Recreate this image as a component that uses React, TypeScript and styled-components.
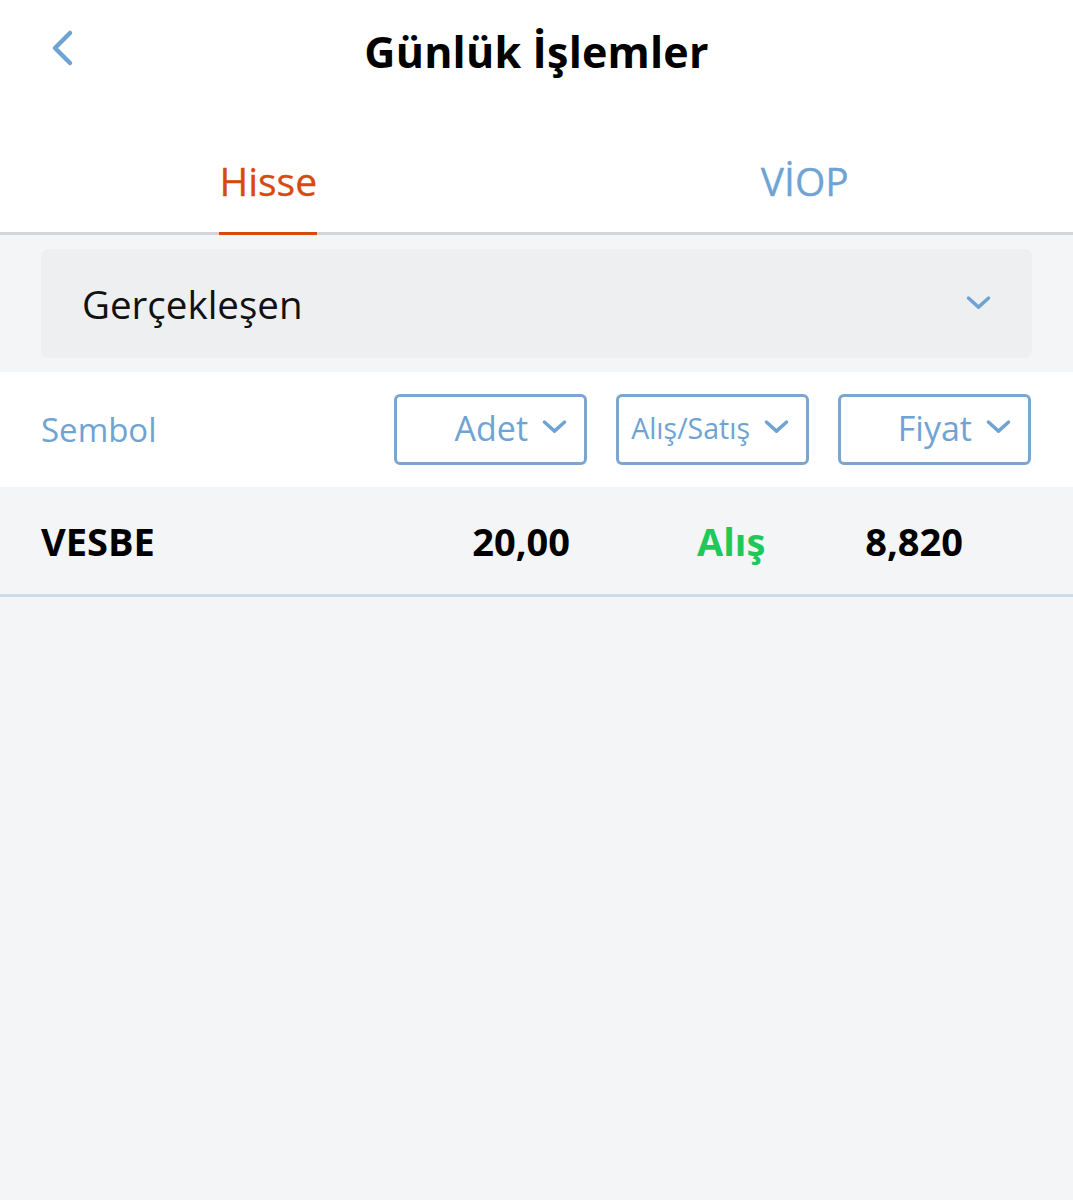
import React from 'react'
import styled, { createGlobalStyle } from 'styled-components'

const GlobalStyle = createGlobalStyle`
  html, body {
    margin: 0;
    padding: 0;
    background: #f4f5f7;
    font-family: 'Open Sans', 'Noto Sans', sans-serif;
  }
`

const Chevron = ({ size = 26, color = '#6fa3d3', width = 3 }) => (
  <svg width={size} height={size * 0.6} viewBox="0 0 26 16" fill="none">
    <path d="M3 3 L13 12 L23 3" stroke={color} strokeWidth={width} strokeLinecap="round" strokeLinejoin="round" />
  </svg>
)

const BackIcon = () => (
  <svg width="28" height="40" viewBox="0 0 28 40" fill="none">
    <path d="M22 4 L7 19 L22 34" stroke="#6fa3d3" strokeWidth="4.5" strokeLinecap="round" strokeLinejoin="round" />
  </svg>
)

export default function App() {
  return (
    <>
      <GlobalStyle />
      <StyledPage>
        <StyledHeader>
          <StyledBack>
            <BackIcon />
          </StyledBack>
          <StyledTitle>Günlük İşlemler</StyledTitle>
        </StyledHeader>
        <StyledTabs>
          <StyledTab $active>
            <StyledTabLabel $active>Hisse</StyledTabLabel>
          </StyledTab>
          <StyledTab>
            <StyledTabLabel>VİOP</StyledTabLabel>
          </StyledTab>
        </StyledTabs>
        <StyledSelectWrap>
          <StyledSelect>
            <span>Gerçekleşen</span>
            <Chevron size={27} width={3.4} />
          </StyledSelect>
        </StyledSelectWrap>
        <StyledFilterRow>
          <StyledSymbolLabel>Sembol</StyledSymbolLabel>
          <StyledSortButton>
            <StyledSortText>Adet</StyledSortText>
            <Chevron size={27} width={3.4} />
          </StyledSortButton>
          <StyledSortButton>
            <StyledSortText $small>Alış/Satış</StyledSortText>
            <Chevron size={27} width={3.4} />
          </StyledSortButton>
          <StyledSortButton>
            <StyledSortText>Fiyat</StyledSortText>
            <Chevron size={27} width={3.4} />
          </StyledSortButton>
        </StyledFilterRow>
        <StyledTradeRow>
          <StyledSymbol>VESBE</StyledSymbol>
          <StyledNumber $right={570}>20,00</StyledNumber>
          <StyledSide>Alış</StyledSide>
          <StyledNumber $right={963}>8,820</StyledNumber>
        </StyledTradeRow>
      </StyledPage>
    </>
  )
}

const StyledPage = styled.div`
  min-height: 1200px;
  background: #f4f5f7;
`

const StyledHeader = styled.header`
  position: relative;
  height: 104px;
  background: #fff;
  display: flex;
  align-items: center;
  justify-content: center;
`

const StyledBack = styled.div`
  position: absolute;
  left: 48px;
  top: 29px;
  display: flex;
`

const StyledTitle = styled.h1`
  margin: 0 0 2px 0;
  font-size: 43px;
  font-weight: 700;
  color: #000;
  letter-spacing: 0.2px;
`

const StyledTabs = styled.nav`
  display: grid;
  grid-template-columns: 1fr 1fr;
  background: #fff;
  height: 131px;
  border-bottom: 3px solid #d4d5d8;
  box-sizing: border-box;
`

const StyledTab = styled.div`
  display: flex;
  justify-content: center;
  align-items: flex-end;
`

const StyledTabLabel = styled.span`
  font-size: 39px;
  line-height: 1;
  padding-bottom: 32px;
  margin-bottom: -3px;
  color: ${(p) => (p.$active ? '#d9480f' : '#6fa3d3')};
  border-bottom: 3px solid ${(p) => (p.$active ? '#d9480f' : 'transparent')};
  -webkit-text-stroke: 0.3px currentColor;
`

const StyledSelectWrap = styled.div`
  padding: 14px 41px;
`

const StyledSelect = styled.div`
  height: 109px;
  background: #eeeff1;
  border-radius: 7px;
  display: flex;
  align-items: center;
  justify-content: space-between;
  padding: 0 40px 0 41px;
  font-size: 38.5px;
  color: #111;
`

const StyledFilterRow = styled.div`
  background: #fff;
  height: 115px;
  display: grid;
  grid-template-columns: 1fr 193px 193px 193px;
  column-gap: 29px;
  align-items: center;
  padding: 0 42px 0 41px;
`

const StyledSymbolLabel = styled.span`
  font-size: 33px;
  color: #6fa3d3;
`

const StyledSortButton = styled.div`
  height: 71px;
  box-sizing: border-box;
  border: 3px solid #7aa6cf;
  border-radius: 6px;
  display: flex;
  align-items: center;
  justify-content: flex-end;
  gap: 13px;
  padding: 0 16px 4px 10px;
`

const StyledSortText = styled.span`
  font-size: ${(p) => (p.$small ? '28.5px' : '34px')};
  color: #6fa3d3;
  white-space: nowrap;
`

const StyledTradeRow = styled.div`
  position: relative;
  height: 107px;
  background: #f4f5f7;
  border-bottom: 3px solid #cfdbe6;
  display: flex;
  align-items: center;
  padding: 0 41px;
  font-size: 38px;
  font-weight: 700;
`

const StyledSymbol = styled.span`
  color: #000;
`

const StyledNumber = styled.span`
  position: absolute;
  right: ${(p) => 1073 - p.$right}px;
  color: #000;
`

const StyledSide = styled.span`
  position: absolute;
  left: 697px;
  color: #1ec95a;
`
